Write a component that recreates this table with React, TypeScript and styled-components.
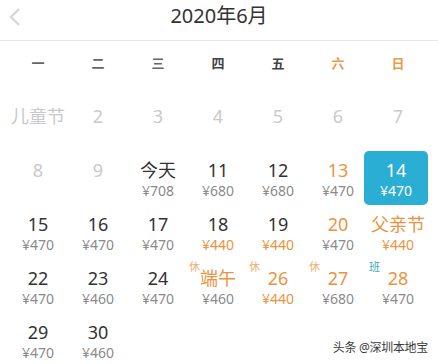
import styled, { createGlobalStyle } from 'styled-components';

const GlobalStyle = createGlobalStyle`
  html, body {
    margin: 0;
    padding: 0;
    background: #fff;
  }
  body {
    font-family: "Noto Sans", "Noto Sans CJK SC", sans-serif;
    color: #333;
  }
`;

const PageWrapper = styled.div`
  position: relative;
  width: 438px;
  height: 364px;
  overflow: hidden;
  background: #fff;
`;

const Header = styled.div`
  position: relative;
  height: 40px;
  border-bottom: 1px solid #e8e8e8;
  display: flex;
  align-items: center;
  justify-content: center;
`;

const BackButton = styled.div`
  position: absolute;
  left: 8px;
  top: 7px;
  width: 14px;
  height: 20px;
`;

const Title = styled.div`
  font-size: 20px;
  color: #333;
  line-height: 30px;
  margin-top: -8px;
`;

const WeekRow = styled.div`
  display: grid;
  grid-template-columns: repeat(7, 60px);
  padding-left: 8px;
  height: 42px;
  align-items: center;
`;

const WeekLabel = styled.div<{ $tone: 'light' | 'dark' | 'weekend' }>`
  text-align: center;
  font-size: 13px;
  font-weight: 700;
  color: ${(p) => (p.$tone === 'weekend' ? '#ec9a48' : p.$tone === 'dark' ? '#444' : '#666')};
`;

const DayGrid = styled.div`
  display: grid;
  grid-template-columns: repeat(7, 60px);
  grid-auto-rows: 54px;
  padding: 14px 0 0 8px;
`;

type Tone = 'disabled' | 'normal' | 'orange';

const Cell = styled.div<{ $selected?: boolean }>`
  position: relative;
  display: flex;
  flex-direction: column;
  align-items: center;
  padding-top: 8px;
  box-sizing: border-box;
  ${(p) =>
    p.$selected &&
    `
    background: #2aaed3;
    border-radius: 5px;
    margin: 0 0 0 -4px;
    width: 64px;
  `}
`;

const DayLabel = styled.div<{ $tone: Tone; $selected?: boolean }>`
  font-size: 18px;
  line-height: 22px;
  color: ${(p) =>
    p.$selected ? '#fff' : p.$tone === 'disabled' ? '#c9c9c9' : p.$tone === 'orange' ? '#ec9340' : '#333'};
`;

const Price = styled.div<{ $orange?: boolean; $selected?: boolean }>`
  font-size: 14px;
  line-height: 16px;
  margin-top: 2px;
  color: ${(p) => (p.$selected ? '#fff' : p.$orange ? '#ec9340' : '#8a8a8a')};
`;

const Tag = styled.span<{ $work?: boolean }>`
  position: absolute;
  left: 1px;
  top: 2px;
  font-size: 11px;
  line-height: 12px;
  color: ${(p) => (p.$work ? '#3fa7ba' : '#e9b072')};
`;

const Watermark = styled.div`
  position: absolute;
  right: 10px;
  bottom: 8px;
  font-size: 12px;
  color: #3a3a3a;
  text-shadow: 0 0 2px #fff, 0 0 2px #fff;
  letter-spacing: -0.3px;
`;

type Day = {
  label: string;
  tone: Tone;
  price?: string;
  orangePrice?: boolean;
  tag?: '休' | '班';
  selected?: boolean;
};

const weekdays: { text: string; tone: 'light' | 'dark' | 'weekend' }[] = [
  { text: '一', tone: 'light' },
  { text: '二', tone: 'light' },
  { text: '三', tone: 'light' },
  { text: '四', tone: 'dark' },
  { text: '五', tone: 'dark' },
  { text: '六', tone: 'weekend' },
  { text: '日', tone: 'weekend' },
];

const days: Day[] = [
  { label: '儿童节', tone: 'disabled' },
  { label: '2', tone: 'disabled' },
  { label: '3', tone: 'disabled' },
  { label: '4', tone: 'disabled' },
  { label: '5', tone: 'disabled' },
  { label: '6', tone: 'disabled' },
  { label: '7', tone: 'disabled' },
  { label: '8', tone: 'disabled' },
  { label: '9', tone: 'disabled' },
  { label: '今天', tone: 'normal', price: '¥708' },
  { label: '11', tone: 'normal', price: '¥680' },
  { label: '12', tone: 'normal', price: '¥680' },
  { label: '13', tone: 'orange', price: '¥470' },
  { label: '14', tone: 'normal', price: '¥470', selected: true },
  { label: '15', tone: 'normal', price: '¥470' },
  { label: '16', tone: 'normal', price: '¥470' },
  { label: '17', tone: 'normal', price: '¥470' },
  { label: '18', tone: 'normal', price: '¥440', orangePrice: true },
  { label: '19', tone: 'normal', price: '¥440', orangePrice: true },
  { label: '20', tone: 'orange', price: '¥470' },
  { label: '父亲节', tone: 'orange', price: '¥440', orangePrice: true },
  { label: '22', tone: 'normal', price: '¥470' },
  { label: '23', tone: 'normal', price: '¥460' },
  { label: '24', tone: 'normal', price: '¥470' },
  { label: '端午', tone: 'orange', price: '¥460', tag: '休' },
  { label: '26', tone: 'orange', price: '¥440', orangePrice: true, tag: '休' },
  { label: '27', tone: 'orange', price: '¥680', tag: '休' },
  { label: '28', tone: 'orange', price: '¥470', tag: '班' },
  { label: '29', tone: 'normal', price: '¥470' },
  { label: '30', tone: 'normal', price: '¥460' },
];

const App = () => {
  return (
    <PageWrapper>
      <GlobalStyle />
      <Header>
        <BackButton>
          <svg width="14" height="20" viewBox="0 0 14 20">
            <path d="M11 2 L3 10 L11 18" fill="none" stroke="#d8d8d8" strokeWidth="2.4" />
          </svg>
        </BackButton>
        <Title>2020年6月</Title>
      </Header>
      <WeekRow>
        {weekdays.map((w) => (
          <WeekLabel key={w.text} $tone={w.tone}>
            {w.text}
          </WeekLabel>
        ))}
      </WeekRow>
      <DayGrid>
        {days.map((d) => (
          <Cell key={d.label} $selected={d.selected}>
            {d.tag && <Tag $work={d.tag === '班'}>{d.tag}</Tag>}
            <DayLabel $tone={d.tone} $selected={d.selected}>
              {d.label}
            </DayLabel>
            {d.price && (
              <Price $orange={d.orangePrice} $selected={d.selected}>
                {d.price}
              </Price>
            )}
          </Cell>
        ))}
      </DayGrid>
      <Watermark>头条 @深圳本地宝</Watermark>
    </PageWrapper>
  );
};

export default App;
